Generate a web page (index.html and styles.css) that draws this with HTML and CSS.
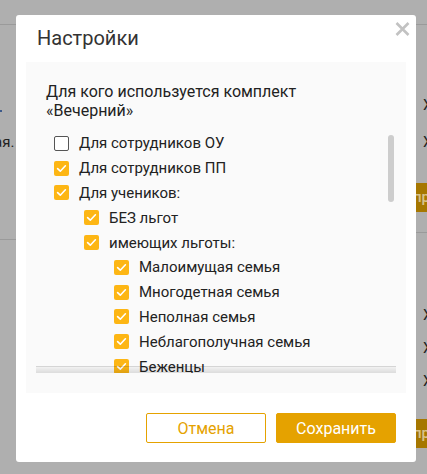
FILE: index.html
```html
<!DOCTYPE html>
<html lang="ru">
<head>
<meta charset="utf-8">
<link rel="stylesheet" href="styles.css">
</head>
<body>
<div class="page">
  <div class="topbar"></div>
  <div class="cols">
    <div class="col-left">
      <span class="dot"></span>
      <div class="frag">ая.</div>
      <div class="sep"></div>
    </div>
    <div class="col-right">
      <div class="xg xg1">Х</div>
      <div class="xg xg2">Х</div>
      <div class="bgbtn bgbtn1">пр</div>
      <div class="sep sep-r"></div>
      <div class="xg xg3">Х</div>
      <div class="xg xg4">Х</div>
      <div class="xg xg4">Х</div>
      <div class="bgbtn bgbtn2">пр</div>
    </div>
  </div>
</div>

<div class="modal">
  <div class="modal-head">
    <div class="title">Настройки</div>
    <svg class="close" width="15" height="14" viewBox="0 0 15 14"><path d="M1.5 1 L13.5 13 M13.5 1 L1.5 13" stroke="#c2c2c2" stroke-width="2.6" fill="none"/></svg>
  </div>
  <div class="panel">
    <div class="heading">Для кого используется комплект «Вечерний»</div>
    <div class="scroll">
      <div class="list">
        <div class="row"><span class="cb"></span><span>Для сотрудников ОУ</span></div>
        <div class="row"><span class="cb on"><svg viewBox="0 0 15 15"><path d="M3.6 7.6 L6.3 10.2 L11.4 4.8"/></svg></span><span>Для сотрудников ПП</span></div>
        <div class="row"><span class="cb on"><svg viewBox="0 0 15 15"><path d="M3.6 7.6 L6.3 10.2 L11.4 4.8"/></svg></span><span>Для учеников:</span></div>
        <div class="row l1"><span class="cb on"><svg viewBox="0 0 15 15"><path d="M3.6 7.6 L6.3 10.2 L11.4 4.8"/></svg></span><span>БЕЗ льгот</span></div>
        <div class="row l1"><span class="cb on"><svg viewBox="0 0 15 15"><path d="M3.6 7.6 L6.3 10.2 L11.4 4.8"/></svg></span><span>имеющих льготы:</span></div>
        <div class="row l2"><span class="cb on"><svg viewBox="0 0 15 15"><path d="M3.6 7.6 L6.3 10.2 L11.4 4.8"/></svg></span><span>Малоимущая семья</span></div>
        <div class="row l2"><span class="cb on"><svg viewBox="0 0 15 15"><path d="M3.6 7.6 L6.3 10.2 L11.4 4.8"/></svg></span><span>Многодетная семья</span></div>
        <div class="row l2"><span class="cb on"><svg viewBox="0 0 15 15"><path d="M3.6 7.6 L6.3 10.2 L11.4 4.8"/></svg></span><span>Неполная семья</span></div>
        <div class="row l2"><span class="cb on"><svg viewBox="0 0 15 15"><path d="M3.6 7.6 L6.3 10.2 L11.4 4.8"/></svg></span><span>Неблагополучная семья</span></div>
        <div class="row l2"><span class="cb on"><svg viewBox="0 0 15 15"><path d="M3.6 7.6 L6.3 10.2 L11.4 4.8"/></svg></span><span>Беженцы</span></div>
        <div class="row l2"><span class="cb on"><svg viewBox="0 0 15 15"><path d="M3.6 7.6 L6.3 10.2 L11.4 4.8"/></svg></span><span>Инвалиды</span></div>
      </div>
      <div class="vthumb"></div>
      <div class="hbar"></div>
    </div>
  </div>
  <div class="actions">
    <button class="btn btn-outline">Отмена</button>
    <button class="btn btn-primary">Сохранить</button>
  </div>
</div>
</body>
</html>
```

FILE: styles.css
```css
html, body {
  margin: 0;
  padding: 0;
}
body {
  width: 427px;
  height: 474px;
  overflow: hidden;
  background: #afafaf;
  font-family: Roboto, "Noto Sans", sans-serif;
  position: relative;
}

/* background page (under overlay) */
.page {
  height: 474px;
}
.topbar {
  height: 24px;
  border-bottom: 1px solid #9a9a9a;
}
.cols {
  display: flex;
  justify-content: space-between;
}
.col-left {
  width: 16px;
  overflow: hidden;
}
.dot {
  display: block;
  width: 2px;
  height: 2px;
  background: #3d5a8a;
  margin-top: 85px;
}
.frag {
  margin-top: 20px;
  margin-left: -6px;
  font-size: 15px;
  line-height: 20px;
  color: #222;
}
.sep {
  height: 1px;
  background: #9a9a9a;
  margin-top: 87px;
}
.col-right {
  width: 17px;
  overflow: hidden;
}
.xg {
  font-size: 15px;
  line-height: 14px;
  height: 14px;
  color: #222;
  margin-left: 13px;
}
.xg1 { margin-top: 73px; }
.xg2 { margin-top: 23px; }
.bgbtn {
  height: 29px;
  line-height: 29px;
  background: #a67700;
  color: #d8c28c;
  font-size: 15px;
  font-weight: 500;
  padding-left: 3px;
}
.bgbtn1 { margin-top: 34px; }
.sep-r { margin-top: 20px; }
.xg3 { margin-top: 75px; }
.xg4 { margin-top: 19px; }
.bgbtn2 { margin-top: 31px; }

/* modal */
.modal {
  position: absolute;
  left: 16px;
  top: 15px;
  width: 400px;
  height: 447px;
  box-sizing: border-box;
  background: #fff;
  border-radius: 3px;
  padding: 11px 10px 19px;
  display: flex;
  flex-direction: column;
}
.modal-head {
  position: relative;
}
.title {
  padding-left: 11px;
  font-size: 20px;
  line-height: 24px;
  color: #333;
}
.close {
  position: absolute;
  top: -4px;
  right: -4px;
}
.panel {
  margin-top: 12px;
  background: #fafafa;
  padding: 20px 10px;
}
.heading {
  padding-left: 10px;
  font-size: 16px;
  line-height: 19px;
  color: #222;
  margin-bottom: 6px;
  padding-right: 40px;
}
.scroll {
  position: relative;
  height: 247px;
  overflow: hidden;
}
.list {
  padding: 5px 0 0 18px;
}
.row {
  display: flex;
  align-items: center;
  gap: 10px;
  height: 24.8px;
  font-size: 15px;
  color: #222;
  white-space: nowrap;
}
.row.l1 { padding-left: 30px; }
.row.l2 { padding-left: 60px; }
.cb {
  flex: none;
  width: 15px;
  height: 15px;
  box-sizing: border-box;
  border: 1.5px solid #555;
  border-radius: 2px;
  background: #fff;
}
.cb.on {
  border: none;
  background: #fdb614;
}
.cb svg {
  display: block;
  width: 15px;
  height: 15px;
}
.cb svg path {
  fill: none;
  stroke: #fff;
  stroke-width: 1.6;
  stroke-linecap: round;
  stroke-linejoin: round;
}
.vthumb {
  position: absolute;
  right: 2px;
  top: 9px;
  width: 6px;
  height: 67px;
  border-radius: 3px;
  background: #cdcdcd;
}
.hbar {
  position: absolute;
  left: 0;
  right: 0;
  bottom: 0;
  height: 6px;
  border-top: 1px solid rgba(0, 0, 0, 0.04);
  background: linear-gradient(rgba(0, 0, 0, 0.03), rgba(0, 0, 0, 0.12));
}
.actions {
  margin-top: 20px;
  display: flex;
  justify-content: flex-end;
  gap: 10px;
  padding-right: 10px;
}
.btn {
  width: 120px;
  height: 30px;
  box-sizing: border-box;
  border-radius: 2px;
  font-family: Roboto, "Noto Sans", sans-serif;
  font-size: 16px;
  padding: 0;
  cursor: pointer;
}
.btn-outline {
  background: #fff;
  border: 1px solid #e5a200;
  color: #e5a200;
}
.btn-primary {
  background: #e5a200;
  border: 1px solid #e5a200;
  color: #fff;
}
```
